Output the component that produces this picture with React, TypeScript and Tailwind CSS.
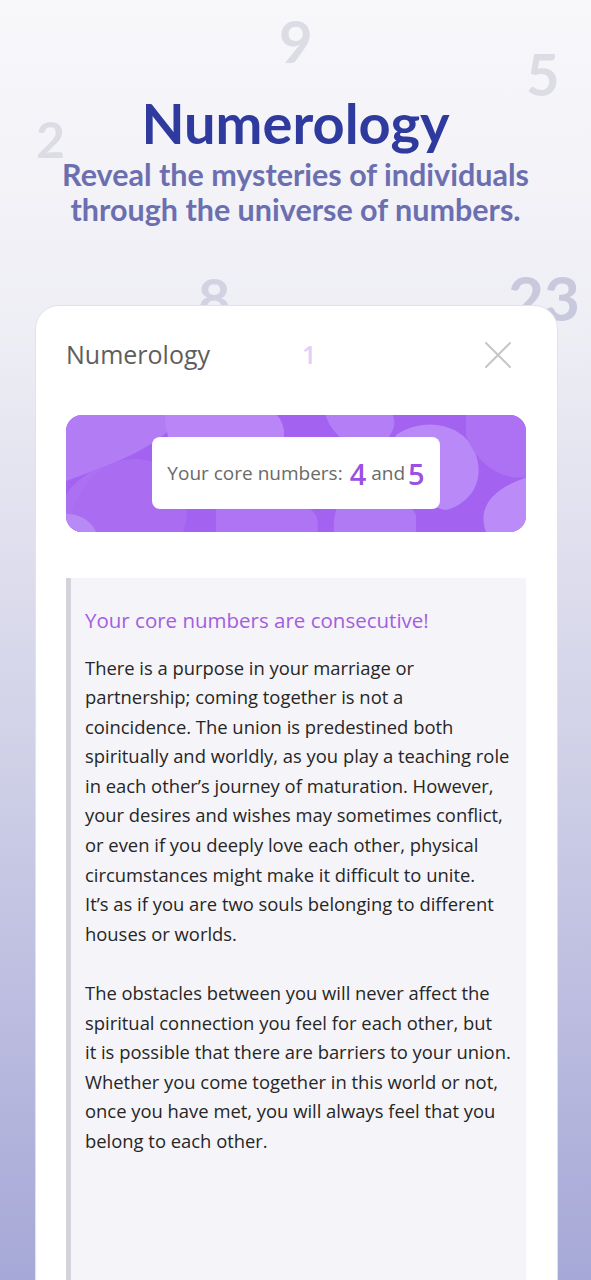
import React from 'react';

const para1 = [
  'There is a purpose in your marriage or',
  'partnership; coming together is not a',
  'coincidence. The union is predestined both',
  'spiritually and worldly, as you play a teaching role',
  'in each other’s journey of maturation. However,',
  'your desires and wishes may sometimes conflict,',
  'or even if you deeply love each other, physical',
  'circumstances might make it difficult to unite.',
  'It’s as if you are two souls belonging to different',
  'houses or worlds.',
];

const para2 = [
  'The obstacles between you will never affect the',
  'spiritual connection you feel for each other, but',
  'it is possible that there are barriers to your union.',
  'Whether you come together in this world or not,',
  'once you have met, you will always feel that you',
  'belong to each other.',
];

const bodyFont = { fontFamily: '"Open Sans", "Noto Sans", sans-serif' };

// soft blob pattern behind the core numbers box
const BannerBlobs = () => (
  <svg className="absolute inset-0 h-full w-full" viewBox="0 0 460 117" preserveAspectRatio="none">
    <path d="M-10 -10 L120 -10 C110 20 70 40 30 55 C10 62 -10 70 -10 70 Z" fill="#b27cf5" />
    <path d="M0 80 C20 50 60 40 90 55 C110 70 100 117 100 130 L0 130 Z" fill="#ac70f3" />
    <path d="M20 70 C40 40 80 35 110 60 C130 90 120 130 100 130 L10 130 C0 110 5 90 20 70 Z" fill="#aa6df2" />
    <path d="M100 -10 L200 -10 C230 10 220 40 190 55 L140 60 C110 50 95 20 100 -10 Z" fill="#b985f7" />
    <path d="M260 -10 L320 -10 C340 10 320 30 300 40 C280 30 255 10 260 -10 Z" fill="#b47ef6" />
    <path d="M330 20 C360 0 400 10 410 40 C420 70 400 90 380 95 C350 90 320 60 330 20 Z" fill="#b98af7" />
    <path d="M400 -10 L470 -10 L470 60 C440 70 410 50 400 20 Z" fill="#ad72f3" />
    <path d="M420 117 C410 90 430 70 470 60 L470 130 L420 130 Z" fill="#bb8cf7" />
    <path d="M150 95 C180 70 230 75 250 100 C255 115 250 130 240 130 L150 130 Z" fill="#ae74f3" />
    <path d="M280 80 C310 65 340 80 350 100 L350 130 L270 130 C265 110 268 90 280 80 Z" fill="#b07af4" />
    <path d="M-10 100 C10 95 25 105 30 117 L-10 117 Z" fill="#b88af6" />
  </svg>
);

export default function App() {
  return (
    <div className="relative min-h-[1280px] w-full overflow-hidden bg-[linear-gradient(180deg,#f8f8fb_0%,#eeeef5_25%,#d3d3e9_55%,#a4a6d6_100%)] font-['Lato',sans-serif]">
      {/* floating background numbers */}
      <span className="absolute left-[279px] top-[12px] text-[58px] font-bold leading-none text-[#dcdce5]">9</span>
      <span className="absolute left-[526px] top-[45px] text-[58px] font-bold leading-none text-[#dcdce5]">5</span>
      <span className="absolute left-[36px] top-[114px] text-[50px] font-bold leading-none text-[#dcdce5]">2</span>
      <span className="absolute left-[198px] top-[270px] text-[56px] font-bold leading-none text-[#d2d2e3]">8</span>
      <span className="absolute left-[508px] top-[266px] text-[62px] font-bold leading-none text-[#c9c9de]">23</span>

      {/* Header */}
      <div className="relative flex flex-col items-center pt-[91px]">
        <h1 className="text-[56px] font-bold leading-[64px] text-[#2f3a9e]">Numerology</h1>
        <p className="mt-[2px] text-center text-[30.5px] font-bold leading-[35px] text-[#6b6fb0]">
          Reveal the mysteries of individuals
          <br />
          through the universe of numbers.
        </p>
      </div>

      {/* Card */}
      <div className="relative ml-[35px] mr-[33px] mt-[78px] h-[1000px] rounded-[24px] border border-[#e2e2ea] bg-white pl-[30px] pr-[31px] pt-[30px]">
        <div className="flex items-center">
          <span className="text-[25px] text-[#5e5e5e]" style={bodyFont}>Numerology</span>
          <span className="ml-[92px] text-[25px] font-semibold text-[#e0cff6]" style={bodyFont}>1</span>
          <svg className="ml-auto mr-[15px]" width="26" height="26" viewBox="0 0 26 26">
            <path d="M1 1 L25 25 M25 1 L1 25" stroke="#c6c6c6" strokeWidth="2" strokeLinecap="round" />
          </svg>
        </div>

        {/* Core numbers banner */}
        <div className="relative mt-[41px] flex h-[117px] items-center justify-center overflow-hidden rounded-[16px] bg-[#a462f0]">
          <BannerBlobs />
          <div className="relative flex h-[72px] w-[288px] items-center justify-center rounded-[8px] bg-white" style={bodyFont}>
            <span className="text-[19px] text-[#6a6a6a]">Your core numbers:</span>
            <span className="ml-[7px] text-[29px] font-semibold leading-none text-[#9b50e2]">4</span>
            <span className="ml-[5px] text-[19px] text-[#6a6a6a]">and</span>
            <span className="ml-[3px] text-[29px] font-semibold leading-none text-[#9b50e2]">5</span>
          </div>
        </div>

        {/* Description */}
        <div className="mt-[46px] h-[800px] border-l-[5px] border-[#d3d3db] bg-[#f5f4f8] pl-[14px] pr-[10px] pt-[28px]" style={bodyFont}>
          <h2 className="text-[20.5px] font-medium leading-[28px] text-[#a35ee0]">Your core numbers are consecutive!</h2>
          <div className="mt-[19px] text-[18.4px] leading-[29.6px] text-[#262626]">
            {para1.map((l) => (
              <div key={l} className="whitespace-nowrap">{l}</div>
            ))}
            <div className="h-[29.6px]" />
            {para2.map((l) => (
              <div key={l} className="whitespace-nowrap">{l}</div>
            ))}
          </div>
        </div>
      </div>
    </div>
  );
}
